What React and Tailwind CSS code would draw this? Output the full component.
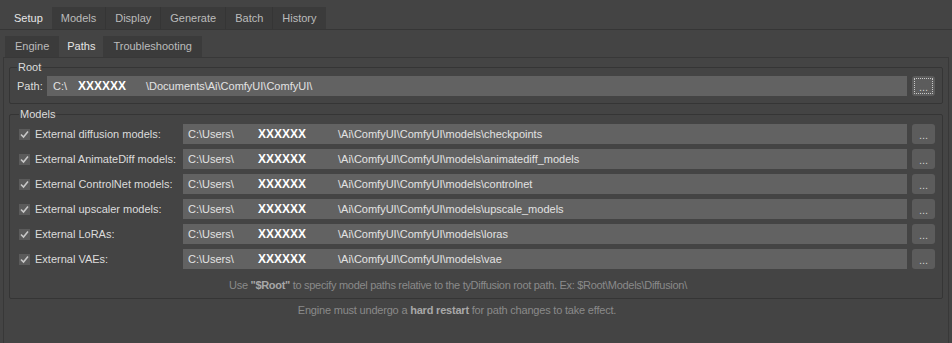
import React from 'react';

const mainTabs = ['Setup', 'Models', 'Display', 'Generate', 'Batch', 'History'];
const subTabs = ['Engine', 'Paths', 'Troubleshooting'];

const models = [
  { label: 'External diffusion models:', tail: '\\Ai\\ComfyUI\\ComfyUI\\models\\checkpoints' },
  { label: 'External AnimateDiff models:', tail: '\\Ai\\ComfyUI\\ComfyUI\\models\\animatediff_models' },
  { label: 'External ControlNet models:', tail: '\\Ai\\ComfyUI\\ComfyUI\\models\\controlnet' },
  { label: 'External upscaler models:', tail: '\\Ai\\ComfyUI\\ComfyUI\\models\\upscale_models' },
  { label: 'External LoRAs:', tail: '\\Ai\\ComfyUI\\ComfyUI\\models\\loras' },
  { label: 'External VAEs:', tail: '\\Ai\\ComfyUI\\ComfyUI\\models\\vae' },
];

const Check = () => (
  <div className="w-[11px] h-[11px] bg-[#5b5b5b] flex items-center justify-center shrink-0">
    <svg width="9" height="9" viewBox="0 0 9 9">
      <path d="M1 4.5 L3.5 7 L8 1.5" stroke="#c8c8c8" strokeWidth="1.6" fill="none" />
    </svg>
  </div>
);

const BrowseButton = ({ focused }) => (
  <button
    className={`ml-[5px] w-[23px] h-[20px] shrink-0 rounded-[3px] bg-[#5c5c5c] text-[#d0d0d0] text-[11px] leading-[20px] pt-[1px] ${
      focused ? 'outline-1 outline-dotted outline-[#c8c8c8] -outline-offset-[3px]' : ''
    }`}
  >
    ...
  </button>
);

export default function App() {
  return (
    <div className="w-[952px] h-[343px] overflow-hidden bg-[#444444] text-[#d8d8d8] text-[11px] leading-[13px] font-['Liberation_Sans',Arial,sans-serif]">
      {/* main tabs */}
      <div className="pt-[7px] pl-[5px] flex">
        {mainTabs.map((t, i) => (
          <div
            key={t}
            className={`h-[22px] flex items-center px-[9px] ${
              i === 0
                ? 'bg-[#444444] text-[#e6e6e6] px-[8px]'
                : 'bg-[#3b3b3b] text-[#bcbcbc] border-l border-[#353535]'
            } ${i === 1 ? 'border-l-0' : ''}`}
          >
            {t}
          </div>
        ))}
      </div>
      <div className="border-t border-[#363636] h-full">
        {/* sub tabs */}
        <div className="pt-[6px] pl-[5px] flex">
          {subTabs.map((t, i) => (
            <div
              key={t}
              className={`h-[21px] flex items-center ${
                i === 1 ? 'bg-[#444444] text-[#e6e6e6] px-[8px]' : 'bg-[#3b3b3b] text-[#bcbcbc] px-[10px]'
              }`}
            >
              {t}
            </div>
          ))}
        </div>
        <div className="mx-[3px] border border-b-0 border-[#383838] h-full px-[5px] pt-[3px]">
          {/* Root */}
          <fieldset className="border border-[#353535] rounded-[2px] px-[7px] pb-[7px] pt-[2px]">
            <legend className="px-[1px] text-[#dcdcdc]">Root</legend>
            <div className="flex items-center">
              <span className="w-[30px] text-[#dcdcdc]">Path:</span>
              <div className="flex-1 h-[20px] bg-[#626262] flex items-center pl-[6px] text-[#e2e2e2] whitespace-nowrap">
                <span className="inline-block w-[25px]">C:\</span>
                <span className="inline-block w-[68px] font-bold text-[12px] text-white">XXXXXX</span>
                <span>\Documents\Ai\ComfyUI\ComfyUI\</span>
              </div>
              <BrowseButton focused />
            </div>
          </fieldset>

          {/* Models */}
          <fieldset className="mt-[4px] border border-[#353535] rounded-[2px] pl-[9px] pr-[7px] pb-[6px] pt-[3px]">
            <legend className="px-[1px] text-[#dcdcdc]">Models</legend>
            <div className="flex flex-col gap-[5px]">
              {models.map((m) => (
                <div key={m.label} className="flex items-center">
                  <Check />
                  <span className="ml-[5px] w-[148px] shrink-0 text-[#dcdcdc] whitespace-nowrap">{m.label}</span>
                  <div className="flex-1 h-[20px] bg-[#626262] flex items-center pl-[5px] text-[#e2e2e2] whitespace-nowrap overflow-hidden">
                    <span className="inline-block w-[70px]">C:\Users\</span>
                    <span className="inline-block w-[80px] font-bold text-[12px] text-white">XXXXXX</span>
                    <span>{m.tail}</span>
                  </div>
                  <BrowseButton />
                </div>
              ))}
            </div>
            <p className="mt-[10px] text-center pr-[38px] text-[#8a8a8a] tracking-[-0.3px]">
              Use <span className="font-bold text-[#a8a8a8]">"$Root"</span> to specify model paths relative to the
              tyDiffusion root path. Ex: $Root\Models\Diffusion\
            </p>
          </fieldset>

          <p className="mt-[5px] text-center pr-[38px] text-[#8a8a8a] tracking-[-0.2px]">
            Engine must undergo a <span className="font-bold text-[#a8a8a8]">hard restart</span> for path changes to
            take effect.
          </p>
        </div>
      </div>
    </div>
  );
}
